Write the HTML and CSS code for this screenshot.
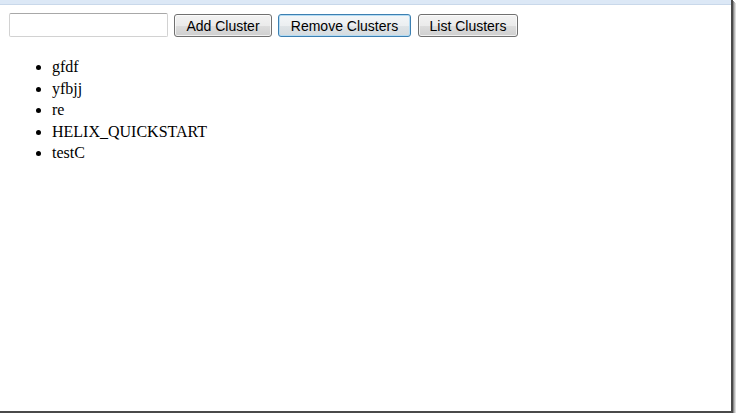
FILE: index.html
```html
<!DOCTYPE html>
<html>
<head>
<meta charset="utf-8">
<link rel="stylesheet" href="styles.css">
</head>
<body>
<div class="frame">
  <div class="topstrip"></div>
  <div class="content">
    <div class="toolbar">
      <input class="field" type="text">
      <button class="btn btn-add">Add Cluster</button>
      <button class="btn btn-remove focused">Remove Clusters</button>
      <button class="btn btn-list">List Clusters</button>
    </div>
    <ul class="clusters">
      <li>gfdf</li>
      <li>yfbjj</li>
      <li>re</li>
      <li>HELIX_QUICKSTART</li>
      <li>testC</li>
    </ul>
  </div>
</div>
</body>
</html>
```
FILE: styles.css
```css
html, body {
  margin: 0;
  padding: 0;
  background: #ffffff;
  overflow: hidden;
}
.frame {
  width: 733px;
  height: 413px;
  box-sizing: border-box;
  border-right: 2px solid #4a4a4a;
  border-bottom: 2px solid #4a4a4a;
  box-shadow: 1px 1px 0 #8a8a8a, 2px 2px 0 #b8b8b8, 3px 3px 0 #dcdcdc;
  background: #fff;
  overflow: hidden;
}
.topstrip {
  height: 4px;
  background: #dce8f6;
  border-bottom: 1px solid #c9d8ea;
}
.content {
  padding: 8px 0 0 9px;
}
.toolbar {
  display: flex;
  align-items: flex-end;
  gap: 6px;
  height: 24px;
}
.field {
  width: 159px;
  height: 24px;
  box-sizing: border-box;
  margin: 0;
  border: 1px solid #d2d2d2;
  border-top-color: #a8a8a8;
  border-radius: 2px;
  background: #fff;
  padding: 0 3px;
}
.btn {
  height: 23px;
  box-sizing: border-box;
  margin: 0;
  padding: 0;
  font-family: "Liberation Sans", Arial, sans-serif;
  font-size: 14px;
  color: #000;
  border: 1px solid #707070;
  border-radius: 3px;
  background: linear-gradient(#f2f2f2 0%, #ebebeb 50%, #dddddd 51%, #cfcfcf 100%);
  box-shadow: inset 0 0 0 1px rgba(255,255,255,0.7);
}
.btn-add { width: 98px; }
.btn-remove { width: 133px; }
.btn-list { width: 100px; margin-left: 1px; }
.btn.focused {
  border-color: #3c7fb1;
  background: linear-gradient(#f3f6f8 0%, #eceff1 50%, #dfe4e7 51%, #d5dbdf 100%);
  box-shadow: inset 0 0 0 1px #b4dcf4;
}
.clusters {
  margin: 19px 0 0 0;
  padding: 0 0 0 43px;
  font-family: "Liberation Serif", "Times New Roman", serif;
  font-size: 16px;
  line-height: 21.5px;
  color: #000;
}
```
